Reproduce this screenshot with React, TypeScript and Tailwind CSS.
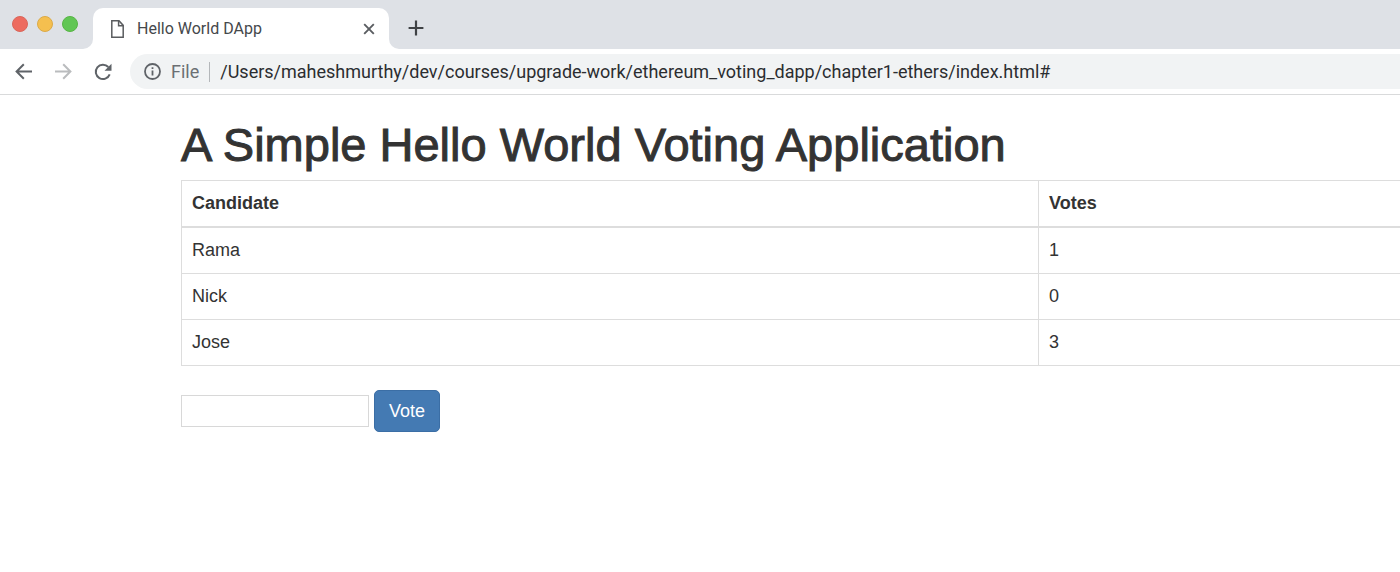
import { useState } from "react";

const candidates = [
  { name: "Rama", votes: 1 },
  { name: "Nick", votes: 0 },
  { name: "Jose", votes: 3 },
];

function TabStrip() {
  return (
    <div className="flex h-[49px] items-end bg-[#dee1e6]">
      <div className="flex h-12 w-[83px] shrink-0 items-center gap-[9px] self-start pl-3">
        <button type="button" aria-label="Close window" className="size-4 rounded-full border border-[#d9665a] bg-[#ed6b5f]" />
        <button type="button" aria-label="Minimize window" className="size-4 rounded-full border border-[#dbaa48] bg-[#f5bf4f]" />
        <button type="button" aria-label="Zoom window" className="size-4 rounded-full border border-[#57b545] bg-[#61c654]" />
      </div>
      <span className="size-2.5 shrink-0 bg-white">
        <span className="block size-full rounded-br-[10px] bg-[#dee1e6]" />
      </span>
      <div className="flex h-[41px] w-[296px] shrink-0 items-center rounded-t-[10px] bg-white pr-3 pl-[18px]">
        <svg className="h-[18px] w-[13px]" viewBox="0 0 13 18" fill="none" stroke="#5a5c5f" strokeWidth="1.5">
          <path d="M.8 .8h7.2l4.2 4.6v11.8H.8z" />
          <path d="M7.6 .9v4.8h4.6" />
        </svg>
        <span className="ml-[13px] flex-1 text-[16px] text-[#45484b]">Hello World DApp</span>
        <button type="button" aria-label="Close tab" className="flex size-4 items-center justify-center">
          <svg className="size-4" viewBox="0 0 16 16" fill="none" stroke="#5a5d61" strokeWidth="1.9">
            <path d="M3.2 3.2l9.6 9.6M12.8 3.2l-9.6 9.6" />
          </svg>
        </button>
      </div>
      <span className="size-2.5 shrink-0 bg-white">
        <span className="block size-full rounded-bl-[10px] bg-[#dee1e6]" />
      </span>
      <button type="button" aria-label="New tab" className="mb-[13px] ml-[9px]">
        <svg className="size-4" viewBox="0 0 16 16" fill="none" stroke="#3f4245" strokeWidth="2.2">
          <path d="M8 .6v14.8M.6 8h14.8" />
        </svg>
      </button>
    </div>
  );
}

function Toolbar() {
  return (
    <div className="flex h-[46px] items-center border-b border-[#d9dadb] bg-white pl-[15px]">
      <button type="button" aria-label="Back">
        <svg className="size-[18px]" viewBox="0 0 18 18" fill="none" stroke="#5f6368" strokeWidth="2">
          <path d="M17 8.5H2M8.8 1.3L1.6 8.5l7.2 7.2" />
        </svg>
      </button>
      <button type="button" aria-label="Forward" className="ml-[22px]">
        <svg className="size-[18px]" viewBox="0 0 18 18" fill="none" stroke="#babcbe" strokeWidth="2">
          <path d="M0 8.5h15M8.2 1.3l7.2 7.2-7.2 7.2" />
        </svg>
      </button>
      <button type="button" aria-label="Reload" className="ml-[21px]">
        <svg className="size-[18px]" viewBox="0 0 18 18" fill="none">
          <path d="M15.7 11.4A7.2 7.2 0 1 1 14.3 4" stroke="#5f6368" strokeWidth="2" />
          <path d="M17.5 .8v7h-7z" fill="#5f6368" />
        </svg>
      </button>
      <div className="ml-[18px] flex h-[35px] min-w-0 flex-1 items-center rounded-l-full bg-[#f1f3f4] pl-3.5">
        <svg className="size-[17px] shrink-0" viewBox="0 0 17 17" fill="none" stroke="#5f6368" strokeWidth="1.8">
          <circle cx="8.5" cy="8.5" r="7.5" />
          <path d="M8.5 7.4v5M8.5 4.3v1.8" />
        </svg>
        <span className="ml-2.5 text-[18px] text-[#6b6f73]">File</span>
        <span className="mx-2.5 h-5 w-px shrink-0 bg-[#b4b7ba]" />
        <input
          aria-label="Address"
          readOnly
          value="/Users/maheshmurthy/dev/courses/upgrade-work/ethereum_voting_dapp/chapter1-ethers/index.html#"
          className="min-w-0 flex-1 bg-transparent text-[18px] text-[#2b2d30] outline-none"
        />
      </div>
    </div>
  );
}

export default function App() {
  const [candidate, setCandidate] = useState("");

  return (
    <div className="min-h-screen bg-white">
      <header className="font-[Roboto,sans-serif]">
        <TabStrip />
        <Toolbar />
      </header>
      <main className="ml-[181px] pt-[25px] font-['Liberation_Sans',Arial,sans-serif] text-[18px] text-[#333333]">
        <h1 className="mb-2.5 text-[47px] leading-[50px] font-medium whitespace-nowrap [-webkit-text-stroke:1px_#333333]">
          A Simple Hello World Voting Application
        </h1>
        <table className="w-full table-fixed border-collapse text-left leading-[27px]">
          <colgroup>
            <col className="w-[857px]" />
            <col />
          </colgroup>
          <thead>
            <tr>
              <th className="border border-b-2 border-[#dddddd] px-2.5 py-[9px] font-bold">Candidate</th>
              <th className="border border-r-0 border-b-2 border-[#dddddd] px-2.5 py-[9px] font-bold">Votes</th>
            </tr>
          </thead>
          <tbody>
            {candidates.map((row) => (
              <tr key={row.name}>
                <td className="border border-[#dddddd] px-2.5 py-[9px]">{row.name}</td>
                <td className="border border-r-0 border-[#dddddd] px-2.5 py-[9px]">{row.votes}</td>
              </tr>
            ))}
          </tbody>
        </table>
        <form className="mt-6 flex items-center gap-[5px]" onSubmit={(e) => e.preventDefault()}>
          <input
            type="text"
            aria-label="Candidate name"
            value={candidate}
            onChange={(e) => setCandidate(e.target.value)}
            className="h-8 w-[188px] border border-[#d8d8d8] bg-white px-1"
          />
          <button type="submit" className="h-[42px] rounded-[5px] border border-[#3b6ea5] bg-[#447ab3] px-3.5 text-white">
            Vote
          </button>
        </form>
      </main>
    </div>
  );
}
